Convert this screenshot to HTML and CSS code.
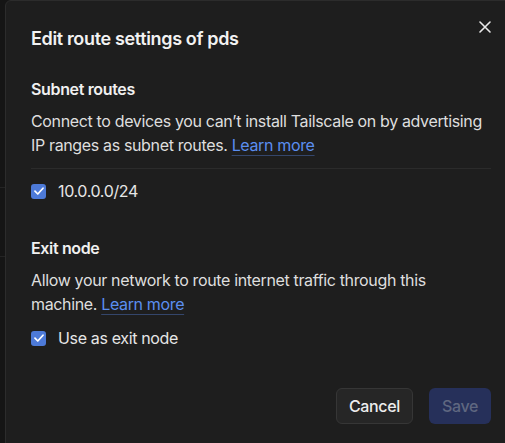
FILE: index.html
```html
<!DOCTYPE html>
<html lang="en">
<head>
<meta charset="utf-8">
<title>Edit route settings</title>
<link rel="stylesheet" href="styles.css">
</head>
<body>
<div class="backdrop">
  <div class="bg-line one"></div>
  <div class="bg-line two"></div>
</div>
<div class="dialog">
  <button class="close" aria-label="Close">
    <svg width="12" height="12" viewBox="0 0 12 12"><path d="M1 1L11 11M11 1L1 11" stroke="#e8e8e8" stroke-width="1.6" stroke-linecap="round"/></svg>
  </button>
  <h1 class="title">Edit route settings of pds</h1>

  <section class="section">
    <h2 class="heading">Subnet routes</h2>
    <p class="desc divided">Connect to devices you can’t install Tailscale on by advertising IP ranges as subnet routes. <a class="link" href="#">Learn more</a></p>
    <label class="check-row">
      <span class="box"><svg width="10" height="8" viewBox="0 0 10 8"><path d="M1 4.2L3.8 7L9 1.2" fill="none" stroke="#fff" stroke-width="1.7" stroke-linecap="round" stroke-linejoin="round"/></svg></span>
      <span class="check-label">10.0.0.0/24</span>
    </label>
  </section>

  <section class="section exit">
    <h2 class="heading">Exit node</h2>
    <p class="desc">Allow your network to route internet traffic through this machine. <a class="link" href="#">Learn more</a></p>
    <label class="check-row">
      <span class="box"><svg width="10" height="8" viewBox="0 0 10 8"><path d="M1 4.2L3.8 7L9 1.2" fill="none" stroke="#fff" stroke-width="1.7" stroke-linecap="round" stroke-linejoin="round"/></svg></span>
      <span class="check-label">Use as exit node</span>
    </label>
  </section>

  <div class="footer">
    <button class="btn cancel">Cancel</button>
    <button class="btn save" disabled>Save</button>
  </div>
</div>
</body>
</html>
```
FILE: styles.css
```css
html, body {
  margin: 0;
  padding: 0;
  overflow: hidden;
  height: 100%;
}
body {
  background: #151515;
  font-family: Inter, "Noto Sans", sans-serif;
  letter-spacing: -0.022em;
  color: #e6e6e6;
  display: flex;
  align-items: flex-start;
}
.backdrop {
  width: 5px;
  flex: none;
  height: 100%;
  position: relative;
}
.bg-line {
  position: absolute;
  left: 0;
  width: 5px;
  height: 1px;
  background: #242424;
}
.bg-line.one { top: 187px; }
.bg-line.two { top: 256px; }
.dialog {
  position: relative;
  flex: none;
  width: 460px;
  padding: 24px 25px 24px 25px;
  background: #1e1e1e;
  border: 1px solid #2c2c2c;
  border-radius: 6px;
}
.close {
  position: absolute;
  top: 20px;
  right: 25px;
  width: 12px;
  height: 12px;
  padding: 0;
  border: 0;
  background: none;
  display: flex;
}
.title {
  margin: 0;
  font-size: 18px;
  line-height: 28px;
  font-weight: 600;
  color: #f2f2f2;
}
.section {
  margin-top: 24px;
}
.section.exit {
  margin-top: 33px;
}
.heading {
  margin: 0;
  font-size: 16px;
  line-height: 24px;
  font-weight: 600;
  color: #f0f0f0;
}
.desc {
  margin: 8px 0 0;
  font-size: 16px;
  line-height: 24px;
  color: #dedede;
}
.desc.divided {
  padding-bottom: 11px;
  border-bottom: 1px solid #2b2b2b;
}
.link {
  color: #5b8ef0;
  text-decoration: underline;
  text-decoration-color: #34466b;
  text-underline-offset: 4px;
  text-decoration-thickness: 1px;
}
.check-row {
  margin-top: 10px;
  display: flex;
  align-items: center;
  gap: 12px;
  font-size: 16px;
  line-height: 24px;
  color: #e6e6e6;
}
.box {
  width: 15px;
  height: 15px;
  border-radius: 3px;
  background: #4d7ad8;
  display: flex;
  align-items: center;
  justify-content: center;
  flex: none;
}
.footer {
  margin-top: 38px;
  display: flex;
  justify-content: flex-end;
  gap: 16px;
}
.btn {
  font-family: Inter, "Noto Sans", sans-serif;
  letter-spacing: -0.022em;
  font-size: 16px;
  font-weight: 500;
  height: 36px;
  padding: 0 12px;
  border-radius: 6px;
  border: 1px solid transparent;
}
.cancel {
  background: #262626;
  border-color: #363636;
  color: #ededed;
}
.save {
  background: #26305a;
  color: #5f6780;
}
```
